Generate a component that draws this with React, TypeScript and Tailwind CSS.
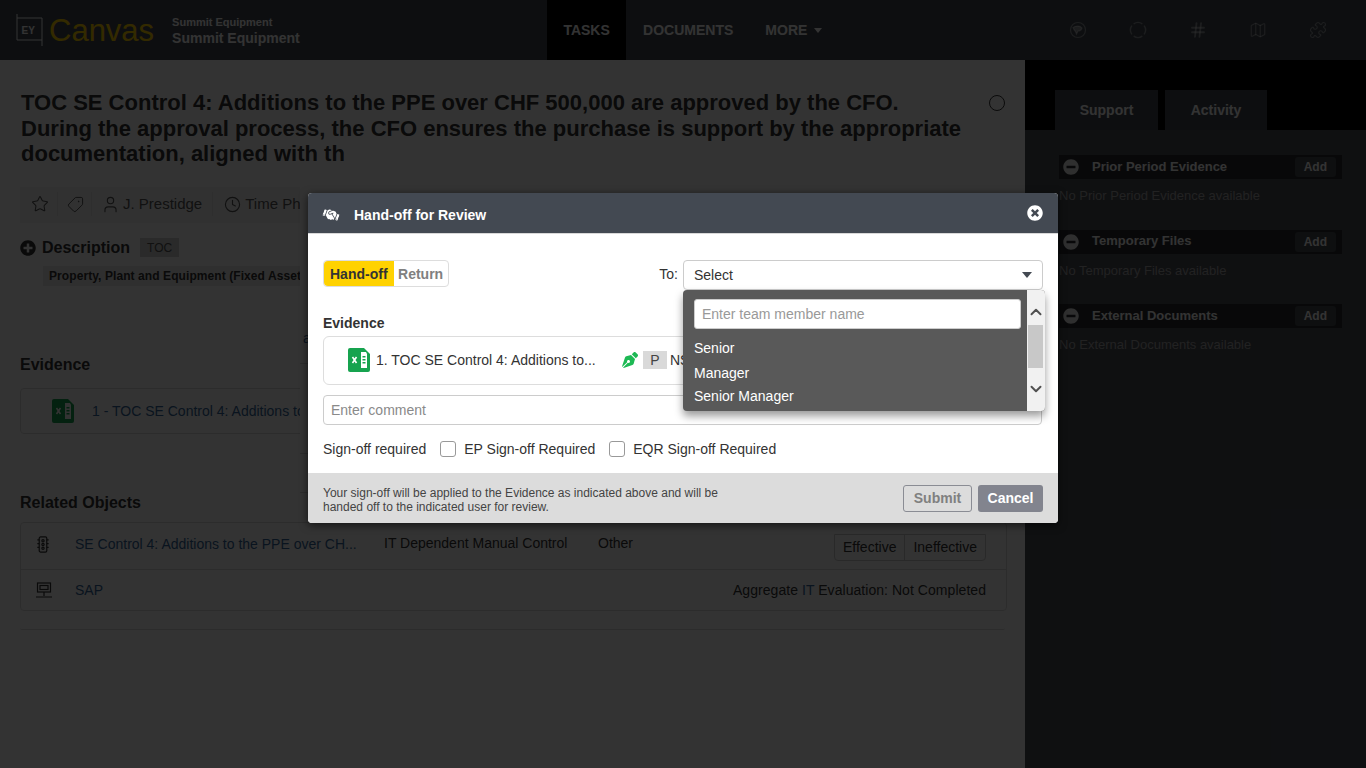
import { ChevronDown, ChevronUp, Clock, Hash, Map as MapIcon, Puzzle, Star, Tag, User } from 'lucide-react';
import { FaHandshake, FaMinusCircle, FaPenNib, FaPlusCircle, FaTimesCircle } from 'react-icons/fa';

function ExcelIcon({ className }: { className: string }) {
  return (
    <svg viewBox="0 0 22 24" className={className}>
      <path d="M2 0h14l6 6v16a2 2 0 0 1-2 2H2a2 2 0 0 1-2-2V2a2 2 0 0 1 2-2z" fill="#16a34f" />
      <path d="M13 4h5l1 2v14h-6z" fill="#fff" />
      <path d="M14.5 8h3v1.6h-3zM14.5 11h3v1.6h-3zM14.5 14h3v1.6h-3z" fill="#16a34f" />
      <path d="M4.5 9l4 6M8.5 9l-4 6" stroke="#fff" strokeWidth="1.6" />
    </svg>
  );
}

function SupportSection({ title, empty }: { title: string; empty: string }) {
  return (
    <div className="h-[74.5px]">
      <div className="flex h-6 w-[283px] items-center bg-[#282a2e] pl-[4px] pr-[6px]">
        <FaMinusCircle className="text-[16px] text-white/90" />
        <span className="ml-[13px] flex-1 text-[13px] font-bold text-white">{title}</span>
        <span className="rounded-[3px] bg-[#474a50] px-[9px] py-[2px] text-xs font-bold text-white">Add</span>
      </div>
      <p className="mt-2 text-[13px] leading-[17px] text-[#a8a8a8]">{empty}</p>
    </div>
  );
}

export default function App() {
  return (
    <div className="relative flex h-screen flex-col overflow-hidden bg-white font-['Liberation_Sans',Arial,sans-serif] text-sm text-[#333]">
      <header className="flex h-[60px] shrink-0 items-center bg-[#434952] text-white">
        <svg viewBox="0 0 32 32" className="ml-[14px] h-8 w-8 shrink-0" fill="none" stroke="#fff" strokeWidth="1">
          <path d="M3 0v26h25M3 4h25v28" />
          <text x="7.5" y="20" fill="#fff" stroke="none" fontSize="10" fontWeight="700">EY</text>
        </svg>
        <span className="ml-[3px] text-[31px] leading-none text-[#ffd200]">Canvas</span>
        <div className="ml-[18px] mt-[2px] w-[375px]">
          <p className="text-[11px] font-bold leading-[14px]">Summit Equipment</p>
          <p className="text-sm font-bold leading-[18px]">Summit Equipment</p>
        </div>
        <nav className="flex h-full items-center text-sm font-bold">
          <span className="flex h-full w-[79px] items-center justify-center bg-black">TASKS</span>
          <span className="ml-[17px]">DOCUMENTS</span>
          <span className="ml-8">MORE</span>
          <span className="ml-[7px] mt-[1px] h-0 w-0 border-x-[4.5px] border-t-[5px] border-x-transparent border-t-white" />
        </nav>
        <div className="ml-auto mr-[39px] flex items-center gap-[42px] text-white/40">
          <svg viewBox="0 0 18 18" className="h-[18px] w-[18px]" fill="none" stroke="currentColor" strokeWidth="1.2">
            <circle cx="9" cy="9" r="7.5" />
            <path d="M4 6.5c3-2 7-2 9 .5-.5 2-2 3-4 3l-1.5 3-1-2.5C5.5 9.5 4.5 8 4 6.5z" fill="currentColor" />
          </svg>
          <svg viewBox="0 0 18 18" className="h-[18px] w-[18px]" fill="none" stroke="currentColor" strokeWidth="1.4">
            <path d="M4.7 2.86A7.5 7.5 0 0 1 13.3 2.86M15.14 4.7A7.5 7.5 0 0 1 15.14 13.3M13.3 15.14A7.5 7.5 0 0 1 4.7 15.14M2.86 13.3A7.5 7.5 0 0 1 2.86 4.7" />
          </svg>
          <Hash size={18} strokeWidth={2.4} />
          <MapIcon size={18} strokeWidth={1.5} />
          <Puzzle size={18} strokeWidth={1.5} />
        </div>
      </header>

      <div className="flex min-h-0 flex-1">
        <main className="w-[1025px] shrink-0 px-5 pt-[30px]">
          <div className="flex">
            <h1 className="w-[950px] pl-[1px] text-[22px] font-bold leading-[25.5px]">
              TOC SE Control 4: Additions to the PPE over CHF 500,000 are approved by the CFO.
              <br />
              During the approval process, the CFO ensures the purchase is support by the appropriate
              <br />
              documentation, aligned with th
            </h1>
            <span className="ml-[19px] mt-[5px] h-4 w-4 rounded-full border-[1.5px] border-[#333]" />
          </div>

          <div className="mt-5 flex">
            <div className="w-[280px] overflow-hidden">
              <div className="flex h-9 w-[420px] items-center bg-[#f4f4f4] pb-[1px] pl-[11px] text-[15px] text-[#555]">
                <Star size={18} strokeWidth={1.4} className="shrink-0" />
                <span className="ml-[8px] h-6 border-l border-[#e4e4e4]" />
                <Tag size={17} strokeWidth={1.4} className="ml-[9px] shrink-0 rotate-90" />
                <span className="ml-[7px] h-6 border-l border-[#e4e4e4]" />
                <User size={19} strokeWidth={1.4} className="ml-[9px] shrink-0" />
                <span className="ml-[3px] whitespace-nowrap">J. Prestidge</span>
                <span className="ml-[10px] h-6 border-l border-[#e4e4e4]" />
                <Clock size={17} strokeWidth={1.6} className="ml-[11px] shrink-0" />
                <span className="ml-[4px] whitespace-nowrap">Time Ph</span>
              </div>
              <div className="mt-[15px] flex h-5 items-center">
                <FaPlusCircle className="text-base" />
                <span className="ml-[6px] text-base font-bold">Description</span>
                <span className="ml-[10px] flex h-[19px] items-center bg-[#d0d0d0] px-[7px] text-xs text-[#555]">TOC</span>
              </div>
              <p className="ml-[23px] mt-[8px] flex h-5 w-[300px] items-center whitespace-nowrap bg-[#ececec] pl-[6px] text-xs font-bold tracking-[0.08px]">
                Property, Plant and Equipment (Fixed Asset
              </p>
              <h2 className="mt-[69px] h-5 text-base font-bold leading-5">Evidence</h2>
              <div className="mt-[13px] flex h-[46px] w-[320px] items-center rounded-l border border-[#ddd]">
                <ExcelIcon className="ml-[31px] h-6 w-[22px] shrink-0" />
                <span className="ml-[18px] mt-[1px] whitespace-nowrap text-[#336699]">1 - TOC SE Control 4: Additions to</span>
              </div>
            </div>
            <div className="flex-1 text-[#336699]">
              <div className="h-[177px] border-b border-[#ddd] pl-[3px] pt-[143px] leading-4">a</div>
              <div className="h-[90px] border-b border-[#ddd]" />
              <div className="h-[39px] border-b border-[#ddd]" />
            </div>
          </div>

          <h2 className="h-5 text-base font-bold leading-5">Related Objects</h2>
          <div className="mt-[9px] w-[987px] rounded border border-[#ddd]">
            <div className="flex h-[47px] items-center border-b border-[#ddd] pl-[15px] pr-5">
              <svg viewBox="0 0 14 18" className="mb-[3px] h-[17px] w-[14px] shrink-0" fill="none" stroke="currentColor" strokeWidth="1.3">
                <rect x="3" y="1" width="8" height="16" rx="1.5" />
                <circle cx="7" cy="5" r="1.2" />
                <circle cx="7" cy="9" r="1.2" />
                <circle cx="7" cy="13" r="1.2" />
                <path d="M3 4H1M3 8H1M3 12H1M11 4h2M11 8h2M11 12h2" />
              </svg>
              <span className="mb-[3px] ml-[25px] w-[309px] text-[#336699]">SE Control 4: Additions to the PPE over CH...</span>
              <span className="mb-[5px] w-[214px]">IT Dependent Manual Control</span>
              <span className="mb-[5px]">Other</span>
              <div className="ml-auto mt-[3px] flex h-[27px] rounded-b border border-[#ccc]">
                <span className="flex items-center border-r border-[#ccc] px-2">Effective</span>
                <span className="flex items-center px-2">Ineffective</span>
              </div>
            </div>
            <div className="flex h-10 items-center pl-[15px] pr-5">
              <svg viewBox="0 0 16 16" className="h-4 w-4 shrink-0" fill="none" stroke="currentColor" strokeWidth="1.2">
                <rect x="1.5" y="1" width="13" height="9" />
                <rect x="4" y="3.5" width="8" height="4" />
                <path d="M8 10v4M0 15h16" />
              </svg>
              <span className="ml-[23px] text-[#336699]">SAP</span>
              <span className="ml-auto tracking-[0.05px]">
                Aggregate <span className="text-[#336699]">IT</span> Evaluation: Not Completed
              </span>
            </div>
          </div>
          <div className="mt-[17px] h-[2px] w-[985px] rounded-b border-b border-[#ddd]" />
        </main>

        <aside className="flex-1 bg-[#4d5058] text-white">
          <div className="flex h-[70px] items-end gap-[7px] bg-black pl-[30px]">
            <span className="flex h-10 w-[103px] items-center justify-center bg-[#434952] font-bold">Support</span>
            <span className="flex h-10 w-[102px] items-center justify-center bg-[#434952] font-bold">Activity</span>
          </div>
          <div className="pl-[34px] pt-[25px]">
            <SupportSection title="Prior Period Evidence" empty="No Prior Period Evidence available" />
            <SupportSection title="Temporary Files" empty="No Temporary Files available" />
            <SupportSection title="External Documents" empty="No External Documents available" />
          </div>
        </aside>
      </div>

      <div className="absolute inset-0 bg-black/80" />

      <div className="absolute left-[308px] top-[193px] flex h-[330px] w-[750px] flex-col overflow-visible rounded bg-white shadow-[0_2px_8px_rgba(0,0,0,0.6)]">
        <div className="flex h-[41px] shrink-0 items-center rounded-t border-b border-[#d8d8d8] bg-[#434952] pl-[15px] pr-[15px] pt-[3px] text-white">
          <FaHandshake className="rotate-[20deg] text-base" />
          <span className="ml-[15px] flex-1 font-bold">Hand-off for Review</span>
          <FaTimesCircle className="mb-[3px] text-base" />
        </div>

        <div className="relative flex-1 px-[15px] pt-[26px]">
          <div className="flex items-start">
            <div className="flex h-[27px] rounded border border-[#ddd] font-bold">
              <span className="flex items-center rounded-l bg-[#ffd200] px-[6px]">Hand-off</span>
              <span className="flex items-center px-[4.5px] text-[#808080]">Return</span>
            </div>
            <span className="ml-auto mr-[5px] mt-[6px] leading-4">To:</span>
            <div className="relative w-[360px]">
              <div className="flex h-[30px] items-center justify-between rounded border border-[#ccc] pl-[10px] pr-[10px]">
                Select
                <span className="h-0 w-0 border-x-[5px] border-t-[6px] border-x-transparent border-t-[#434952]" />
              </div>
              <div className="absolute left-0 top-[30px] z-10 flex h-[121px] w-[362px] rounded bg-[#595959] shadow-[0_5px_8px_rgba(0,0,0,0.4)]">
                <div className="flex-1 pl-[11px] pr-[6px] pt-[9px] text-white">
                  <div className="flex h-[30px] items-center rounded-[3px] border border-[#ccc] bg-white pl-[7px] text-[#999]">
                    Enter team member name
                  </div>
                  <p className="mt-[10px] leading-[18px]">Senior</p>
                  <p className="mt-[7px] leading-[18px]">Manager</p>
                  <p className="mt-[5px] leading-[18px]">Senior Manager</p>
                </div>
                <div className="flex w-[18px] flex-col items-center rounded-r-sm bg-[#f1f1f1] pr-[1px] text-[#505050]">
                  <ChevronUp size={18} strokeWidth={2.6} className="mt-[13px] shrink-0" />
                  <div className="mt-[4px] h-[43px] w-[15px] shrink-0 bg-[#c8c8c8]" />
                  <ChevronDown size={18} strokeWidth={2.6} className="mt-[12px] shrink-0" />
                </div>
              </div>
            </div>
          </div>

          <h3 className="mt-[25px] font-bold leading-4">Evidence</h3>
          <div className="mt-[5px] flex h-[49px] w-[719px] items-center rounded-md border border-[#ddd] pb-[2px] pl-6">
            <ExcelIcon className="h-6 w-[22px] shrink-0" />
            <span className="ml-[6px] w-[246px]">1. TOC SE Control 4: Additions to...</span>
            <FaPenNib className="text-[16px] text-[#1db954]" />
            <span className="ml-[5px] flex h-[18px] w-6 items-center justify-center bg-[#d9d9d9] text-[#444]">P</span>
            <span className="ml-[3px]">NS</span>
          </div>
          <div className="mt-[10px] flex h-[30px] w-[719px] items-center rounded border border-[#ccc] pl-[7px] text-[#8a8a8a]">
            Enter comment
          </div>
          <div className="mt-[15px] flex h-[18px] items-center">
            <span>Sign-off required</span>
            <span className="ml-[14px] h-4 w-4 rounded-[3px] border border-[#999]" />
            <span className="ml-2">EP Sign-off Required</span>
            <span className="ml-[14px] h-4 w-4 rounded-[3px] border border-[#999]" />
            <span className="ml-2">EQR Sign-off Required</span>
          </div>
        </div>

        <div className="flex h-[50px] shrink-0 items-center rounded-b bg-[#dcdcdc] pl-[15px] pr-[15px]">
          <p className="mt-[4px] w-[420px] text-xs leading-[14px] text-[#444]">
            Your sign-off will be applied to the Evidence as indicated above and will be handed off to the indicated user for review.
          </p>
          <span className="ml-auto flex h-[27px] w-[69px] items-center justify-center rounded-[3px] border border-[#8a8c94] font-bold text-[#808080]">
            Submit
          </span>
          <span className="ml-[6px] flex h-[27px] w-[65px] items-center justify-center rounded-[3px] bg-[#82848e] font-bold text-white">
            Cancel
          </span>
        </div>
      </div>
    </div>
  );
}
